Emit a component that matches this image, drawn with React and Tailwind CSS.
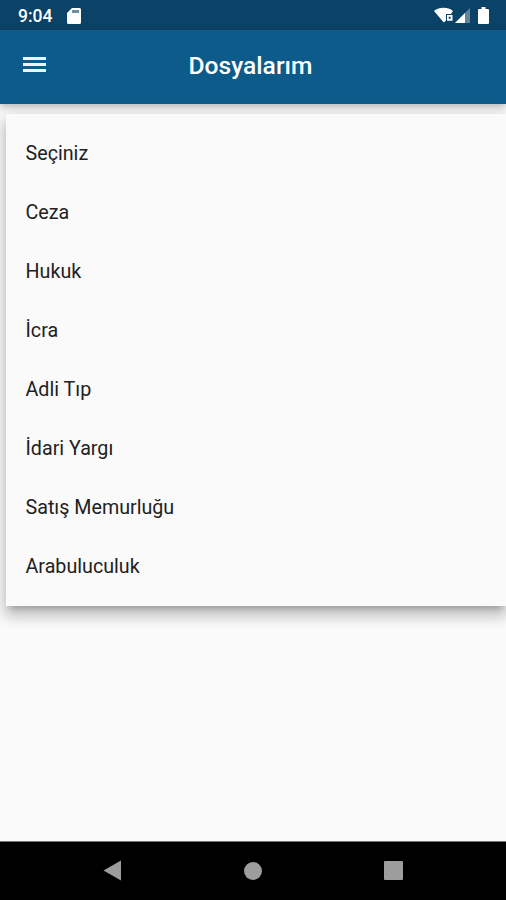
const items = [
  "Seçiniz",
  "Ceza",
  "Hukuk",
  "İcra",
  "Adli Tıp",
  "İdari Yargı",
  "Satış Memurluğu",
  "Arabuluculuk",
];

function StatusBar() {
  return (
    <div className="flex h-[30px] shrink-0 items-center bg-[#0a4367] pl-[18px] pr-[17px] text-white">
      <span className="mt-[3px] text-[17.5px] leading-none font-medium">9:04</span>
      <svg className="mt-[1px] ml-[15px] h-[16px] w-[14px]" viewBox="0 0 14 16">
        <path
          fill="currentColor"
          d="M5 0h7.400A1.500 1.500 0 0 1 14 1.500v13A1.500 1.500 0 0 1 12.500 16h-11A1.500 1.500 0 0 1 0 14.500V5z"
        />
        <path fill="#0a4367" fillOpacity="0.6" d="M5 2h7v3H5z" />
      </svg>
      <svg className="ml-auto h-[16px] w-[19px]" viewBox="0 0 19 16">
        <path fill="currentColor" d="M0 4C5-.4 14-.4 19 4L17 7H12v6.500L9.800 15.500z" />
        <path
          fill="currentColor"
          fillRule="evenodd"
          d="M13 8h5.500v5.700H13zM14.700 9.800v2h2v-2z"
        />
      </svg>
      <svg className="ml-[2px] h-[15px] w-[15px]" viewBox="0 0 15 15">
        <path fill="currentColor" fillOpacity="0.35" d="M0 15L15 0v15z" />
        <path fill="currentColor" d="M0 15L10 5v10z" />
      </svg>
      <svg className="ml-[8px] h-[17px] w-[11px]" viewBox="0 0 11 17">
        <path
          fill="currentColor"
          d="M3.500 0h4v2H10a1 1 0 0 1 1 1v13a1 1 0 0 1-1 1H1a1 1 0 0 1-1-1V3a1 1 0 0 1 1-1h2.500z"
        />
      </svg>
    </div>
  );
}

function AppBar() {
  return (
    <header className="grid h-[74px] shrink-0 grid-cols-[70px_1fr_75px] items-center bg-[#0d5b8a] pb-[3px] text-white shadow-[0_2px_8px_rgba(0,0,0,0.3)]">
      <button className="mb-[2px] ml-[23px] flex w-[23px] flex-col gap-[3px]" aria-label="Menü">
        <span className="h-[3px] bg-[#edf3f7]" />
        <span className="h-[3px] bg-[#edf3f7]" />
        <span className="h-[3px] bg-[#edf3f7]" />
      </button>
      <h1 className="pt-px text-center text-[24.6px] leading-none font-medium">Dosyalarım</h1>
    </header>
  );
}

function DropdownMenu() {
  return (
    <ul className="ml-[6px] h-[491.5px] bg-[#fafafa] py-[10px] shadow-[0_6px_6px_-4px_rgba(0,0,0,0.2),0_10px_12px_1px_rgba(0,0,0,0.14),0_4px_17px_2px_rgba(0,0,0,0.14)]">
      {items.map((item) => (
        <li
          key={item}
          className="flex h-[59px] items-center pl-[19.500px] text-[19.7px] text-[#212121]"
        >
          {item}
        </li>
      ))}
    </ul>
  );
}

function NavigationBar() {
  return (
    <nav className="flex h-[59px] shrink-0 items-center justify-between border-t border-[#777] bg-black pr-[103px] pb-px pl-[103px] text-[#9d9d9d]">
      <svg className="h-[21px] w-[19px]" viewBox="0 0 19 21">
        <path fill="currentColor" d="M.5 10.500L18 .5v20z" />
      </svg>
      <svg className="h-[18px] w-[18px]" viewBox="0 0 18 18">
        <circle cx="9" cy="9" r="9" fill="currentColor" />
      </svg>
      <span className="h-[19px] w-[19px] rounded-[1px] bg-[#9d9d9d]" />
    </nav>
  );
}

export default function App() {
  return (
    <div className="flex h-[900px] w-[506px] flex-col overflow-hidden bg-[#fafafa] font-[Roboto,sans-serif]">
      <StatusBar />
      <AppBar />
      <main className="flex-1 pt-[10px]">
        <DropdownMenu />
      </main>
      <NavigationBar />
    </div>
  );
}
